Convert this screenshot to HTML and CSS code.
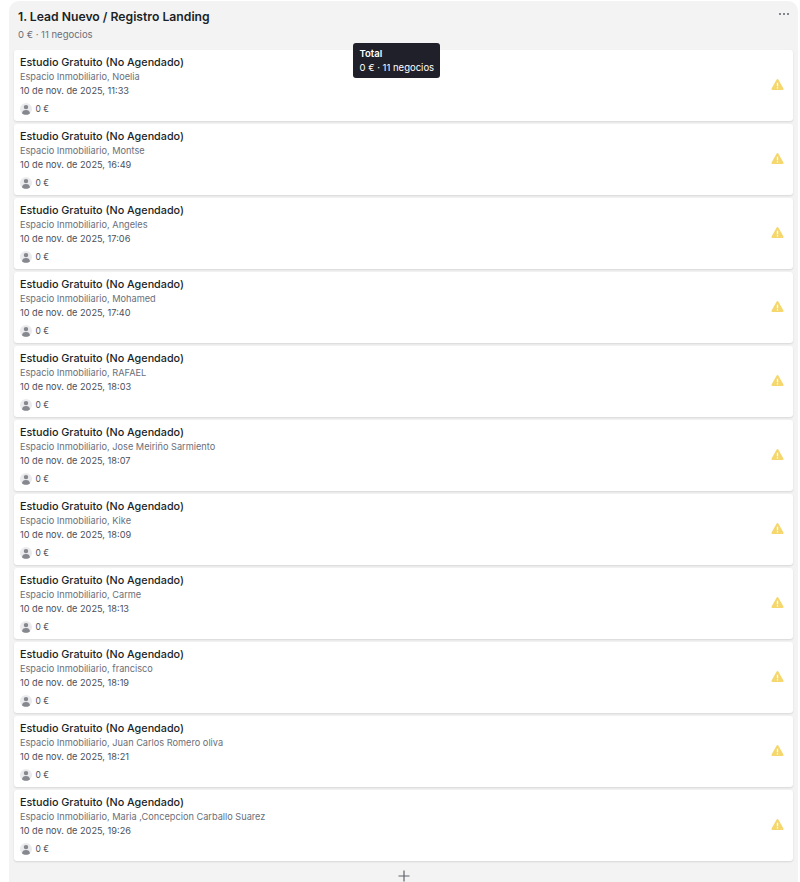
FILE: index.html
```html
<!DOCTYPE html>
<html lang="es">
<head>
  <meta charset="UTF-8">
  <meta name="viewport" content="width=device-width, initial-scale=1.0">
  <title>Lead Nuevo / Registro Landing</title>
  <link rel="stylesheet" href="styles.css">
</head>
<body>
  <svg class="icon-defs" width="0" height="0" aria-hidden="true">
    <symbol id="icon-person" viewBox="0 0 14 14">
      <circle cx="7" cy="4.800" r="2.600"/>
      <path d="M2.400 12.200c0-2.500 2-3.900 4.600-3.900s4.600 1.400 4.600 3.900c-1.200 1-2.800 1.500-4.600 1.500s-3.400-.5-4.600-1.500z"/>
    </symbol>
    <symbol id="icon-warning" viewBox="0 0 14 14">
      <path fill-rule="evenodd" d="M7 1.200c.4 0 .7.2.9.5l5.500 9.700c.4.700-.1 1.500-.9 1.500H1.500c-.8 0-1.300-.8-.9-1.500l5.500-9.700c.2-.3.5-.5.9-.5zM6.300 5v4h1.400V5zm0 5v1.400h1.400V10z"/>
    </symbol>
  </svg>

  <section class="column">
    <header class="column-header">
      <div>
        <h2>1. Lead Nuevo / Registro Landing</h2>
        <p class="column-total">0 € · 11 negocios</p>
      </div>
      <button class="more-btn" aria-label="Más opciones"><span></span><span></span><span></span></button>
    </header>

    <div class="tooltip">
      <strong>Total</strong>
      <span>0 € · 11 negocios</span>
    </div>

    <div class="cards">
      <article class="card">
        <div class="card-body">
          <h3>Estudio Gratuito (No Agendado)</h3>
          <p class="org">Espacio Inmobiliario, Noelia</p>
          <p class="date">10 de nov. de 2025, 11:33</p>
          <div class="owner"><span class="avatar"><svg><use href="#icon-person"/></svg></span>0 €</div>
        </div>
        <svg class="warning"><use href="#icon-warning"/></svg>
      </article>
      <article class="card">
        <div class="card-body">
          <h3>Estudio Gratuito (No Agendado)</h3>
          <p class="org">Espacio Inmobiliario, Montse</p>
          <p class="date">10 de nov. de 2025, 16:49</p>
          <div class="owner"><span class="avatar"><svg><use href="#icon-person"/></svg></span>0 €</div>
        </div>
        <svg class="warning"><use href="#icon-warning"/></svg>
      </article>
      <article class="card">
        <div class="card-body">
          <h3>Estudio Gratuito (No Agendado)</h3>
          <p class="org">Espacio Inmobiliario, Angeles</p>
          <p class="date">10 de nov. de 2025, 17:06</p>
          <div class="owner"><span class="avatar"><svg><use href="#icon-person"/></svg></span>0 €</div>
        </div>
        <svg class="warning"><use href="#icon-warning"/></svg>
      </article>
      <article class="card">
        <div class="card-body">
          <h3>Estudio Gratuito (No Agendado)</h3>
          <p class="org">Espacio Inmobiliario, Mohamed</p>
          <p class="date">10 de nov. de 2025, 17:40</p>
          <div class="owner"><span class="avatar"><svg><use href="#icon-person"/></svg></span>0 €</div>
        </div>
        <svg class="warning"><use href="#icon-warning"/></svg>
      </article>
      <article class="card">
        <div class="card-body">
          <h3>Estudio Gratuito (No Agendado)</h3>
          <p class="org">Espacio Inmobiliario, RAFAEL</p>
          <p class="date">10 de nov. de 2025, 18:03</p>
          <div class="owner"><span class="avatar"><svg><use href="#icon-person"/></svg></span>0 €</div>
        </div>
        <svg class="warning"><use href="#icon-warning"/></svg>
      </article>
      <article class="card">
        <div class="card-body">
          <h3>Estudio Gratuito (No Agendado)</h3>
          <p class="org">Espacio Inmobiliario, Jose Meiriño Sarmiento</p>
          <p class="date">10 de nov. de 2025, 18:07</p>
          <div class="owner"><span class="avatar"><svg><use href="#icon-person"/></svg></span>0 €</div>
        </div>
        <svg class="warning"><use href="#icon-warning"/></svg>
      </article>
      <article class="card">
        <div class="card-body">
          <h3>Estudio Gratuito (No Agendado)</h3>
          <p class="org">Espacio Inmobiliario, Kike</p>
          <p class="date">10 de nov. de 2025, 18:09</p>
          <div class="owner"><span class="avatar"><svg><use href="#icon-person"/></svg></span>0 €</div>
        </div>
        <svg class="warning"><use href="#icon-warning"/></svg>
      </article>
      <article class="card">
        <div class="card-body">
          <h3>Estudio Gratuito (No Agendado)</h3>
          <p class="org">Espacio Inmobiliario, Carme</p>
          <p class="date">10 de nov. de 2025, 18:13</p>
          <div class="owner"><span class="avatar"><svg><use href="#icon-person"/></svg></span>0 €</div>
        </div>
        <svg class="warning"><use href="#icon-warning"/></svg>
      </article>
      <article class="card">
        <div class="card-body">
          <h3>Estudio Gratuito (No Agendado)</h3>
          <p class="org">Espacio Inmobiliario, francisco</p>
          <p class="date">10 de nov. de 2025, 18:19</p>
          <div class="owner"><span class="avatar"><svg><use href="#icon-person"/></svg></span>0 €</div>
        </div>
        <svg class="warning"><use href="#icon-warning"/></svg>
      </article>
      <article class="card">
        <div class="card-body">
          <h3>Estudio Gratuito (No Agendado)</h3>
          <p class="org">Espacio Inmobiliario, Juan Carlos Romero oliva</p>
          <p class="date">10 de nov. de 2025, 18:21</p>
          <div class="owner"><span class="avatar"><svg><use href="#icon-person"/></svg></span>0 €</div>
        </div>
        <svg class="warning"><use href="#icon-warning"/></svg>
      </article>
      <article class="card">
        <div class="card-body">
          <h3>Estudio Gratuito (No Agendado)</h3>
          <p class="org">Espacio Inmobiliario, Maria ,Concepcion Carballo Suarez</p>
          <p class="date">10 de nov. de 2025, 19:26</p>
          <div class="owner"><span class="avatar"><svg><use href="#icon-person"/></svg></span>0 €</div>
        </div>
        <svg class="warning"><use href="#icon-warning"/></svg>
      </article>
    </div>

    <button class="add-btn" aria-label="Añadir negocio">
      <svg width="12" height="12" viewBox="0 0 12 12"><path d="M6 .5v11M.5 6h11"/></svg>
    </button>
  </section>
</body>
</html>
```

FILE: styles.css
```css
/* General */
html, body {
  height: 100%;
}

body {
  margin: 0;
  background: #fff;
  font-family: Inter, 'Noto Sans', sans-serif;
  color: #1b1f27;
  overflow: hidden;
}

.icon-defs {
  display: block;
}

/* Column */
.column {
  position: relative;
  margin: 1px 2px 0 9px;
  padding: 0 5px 0 5px;
  height: 881px;
  background: #f3f3f3;
  border-radius: 10px 10px 0 0;
  box-sizing: border-box;
}

.column-header {
  display: flex;
  justify-content: space-between;
  height: 49px;
  padding: 8px 4px 0 4px;
  box-sizing: border-box;
}

.column-header h2 {
  margin: 0;
  font-size: 12.2px;
  line-height: 16px;
  font-weight: 600;
}

.column-total {
  margin: 4px 0 0;
  font-size: 9.5px;
  line-height: 12px;
  color: #6a6f7a;
}

.more-btn {
  display: flex;
  gap: 2px;
  height: 4px;
  margin-top: 4px;
  padding: 0;
  border: 0;
  background: none;
}

.more-btn span {
  width: 2px;
  height: 2px;
  border-radius: 50%;
  background: #5f636c;
}

/* Tooltip */
.tooltip {
  position: absolute;
  top: 42px;
  left: 344px;
  display: flex;
  flex-direction: column;
  gap: 2px;
  padding: 5px 6px 4px 6.500px;
  background: #1f2029;
  border-radius: 3px;
  color: #fff;
  font-size: 9.5px;
  line-height: 12px;
  z-index: 2;
}

.tooltip strong {
  font-weight: 600;
}

/* Cards */
.cards {
  display: flex;
  flex-direction: column;
  gap: 3px;
}

.card {
  display: flex;
  align-items: center;
  justify-content: space-between;
  height: 71px;
  padding: 0 9px 0 6px;
  background: #fff;
  border-radius: 3px;
  box-shadow: 0 1px 2px rgba(0, 0, 0, 0.12);
  box-sizing: border-box;
}

.card h3 {
  margin: 0;
  font-size: 10.8px;
  line-height: 14px;
  font-weight: 500;
}

.card p {
  margin: 0;
  font-size: 9.2px;
  line-height: 14px;
}

.org {
  color: #6a6f7a;
}

.date {
  color: #4c505a;
}

.owner {
  display: flex;
  align-items: center;
  gap: 3.5px;
  margin-top: 5px;
  font-size: 8.5px;
  line-height: 12px;
  color: #4c505a;
}

.avatar {
  width: 12px;
  height: 12px;
  border-radius: 50%;
  background: #ebebed;
}

.avatar svg {
  display: block;
  width: 12px;
  height: 12px;
  fill: #85888e;
}

.warning {
  width: 13px;
  height: 13px;
  margin-bottom: 3px;
  fill: #f5d76e;
}

/* Add button */
.add-btn {
  display: block;
  margin: 9px auto 0;
  padding: 0;
  border: 0;
  background: none;
  line-height: 0;
}

.add-btn svg {
  stroke: #5f636c;
  stroke-width: 1.2;
}
```
